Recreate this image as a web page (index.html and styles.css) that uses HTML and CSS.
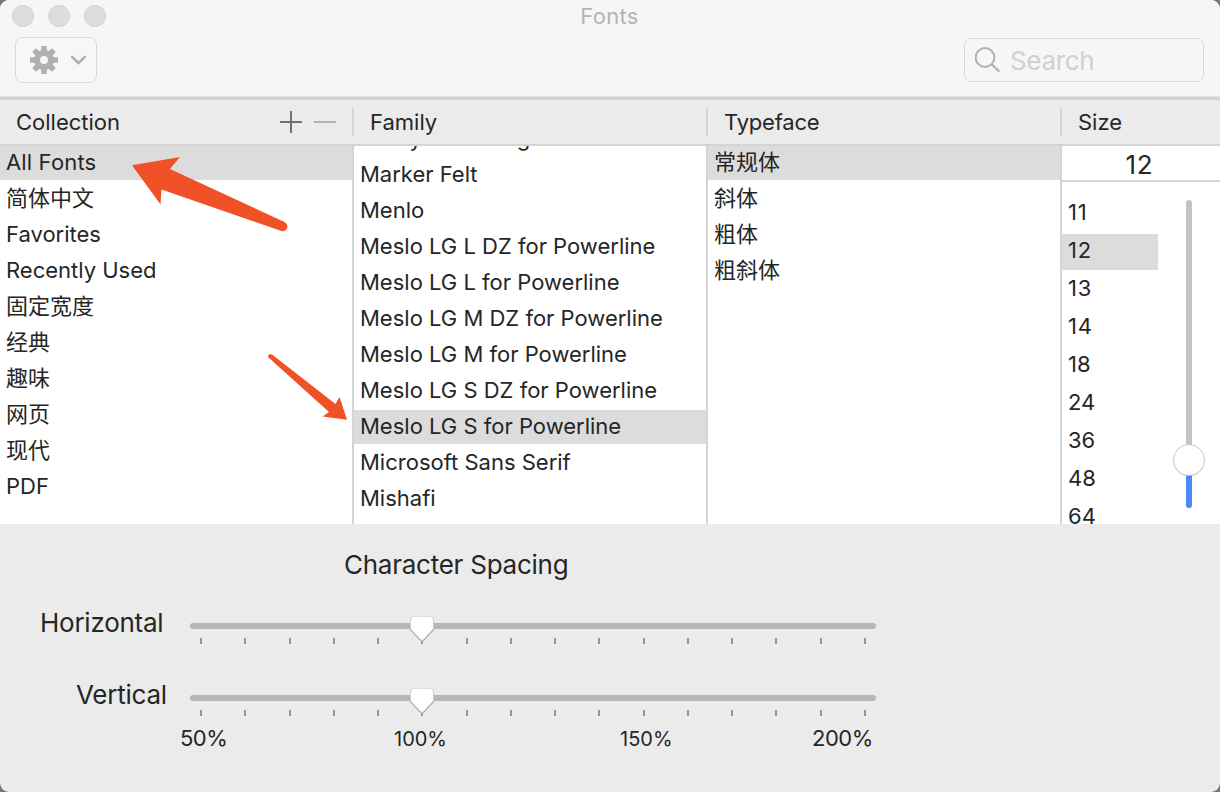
FILE: index.html
```html
<!DOCTYPE html>
<html lang="en">
<head>
<meta charset="utf-8">
<title>Fonts</title>
<link rel="stylesheet" href="styles.css">
</head>
<body>
<div class="window">
  <header class="toolbar">
    <div class="titlebar">
      <div class="lights"><i></i><i></i><i></i></div>
      <h1 class="title">Fonts</h1>
    </div>
    <div class="tools">
      <button class="gear-button" aria-label="Actions">
        <svg width="28" height="28" viewBox="-14 -14 28 28" fill="#b0b0b0">
          <path fill-rule="evenodd" d="M-10 0a10 10 0 1 0 20 0a10 10 0 1 0-20 0zM-4 0a4 4 0 1 0 8 0a4 4 0 1 0-8 0z"/>
          <g id="teeth"><path id="t" d="M-3-9L-2.600-14H2.600L3-9z"/><use href="#t" transform="rotate(45)"/><use href="#t" transform="rotate(90)"/><use href="#t" transform="rotate(135)"/></g>
          <use href="#teeth" transform="rotate(180)"/>
        </svg>
        <svg width="16" height="10" viewBox="0 0 16 10" fill="none" stroke="#b0b0b0" stroke-width="2.6" stroke-linecap="round" stroke-linejoin="round"><path d="M2.300 1.800L8.500 8.200l6.200-6.400"/></svg>
      </button>
      <div class="search">
        <svg width="26" height="26" viewBox="0 0 26 26" fill="none" stroke="#b0b0b0" stroke-width="2"><circle cx="10" cy="10.500" r="9.400"/><path d="M16.800 17.300L24.300 24.800"/></svg>
        <span>Search</span>
      </div>
    </div>
  </header>
  <div class="heads">
    <div class="head"><span>Collection</span>
      <svg class="plusminus" width="56" height="22" viewBox="0 0 56 22"><path d="M0 11H22M11 0V22" stroke="#707070" stroke-width="2"/><path d="M34 11H56" stroke="#b2b2b2" stroke-width="2"/></svg>
    </div>
    <div class="head"><span>Family</span></div>
    <div class="head"><span class="narrow">Typeface</span></div>
    <div class="head"><span>Size</span></div>
  </div>
  <main class="columns">
    <ul class="list">
      <li class="on wide">All Fonts</li><li>简体中文</li><li>Favorites</li><li>Recently Used</li><li>固定宽度</li><li>经典</li><li>趣味</li><li>网页</li><li>现代</li><li>PDF</li>
    </ul>
    <ul class="list family">
      <li>Malayalam Sangam MN</li><li>Marker Felt</li><li>Menlo</li><li>Meslo LG L DZ for Powerline</li><li>Meslo LG L for Powerline</li><li>Meslo LG M DZ for Powerline</li><li>Meslo LG M for Powerline</li><li>Meslo LG S DZ for Powerline</li><li class="on">Meslo LG S for Powerline</li><li>Microsoft Sans Serif</li><li>Mishafi</li>
    </ul>
    <ul class="list">
      <li class="on">常规体</li><li>斜体</li><li>粗体</li><li>粗斜体</li>
    </ul>
    <section class="size">
      <div class="size-field">12</div>
      <div class="size-body">
        <ul class="sizes">
          <li>10</li><li>11</li><li class="on">12</li><li>13</li><li>14</li><li>18</li><li>24</li><li>36</li><li>48</li><li>64</li>
        </ul>
        <svg class="vslider" width="40" height="324" viewBox="0 0 40 324">
          <rect x="17" y="2" width="6" height="308" rx="3" fill="#c4c4c4"/>
          <path d="M17 262h6v45a3 3 0 0 1-6 0z" fill="#4b89f7"/>
          <circle cx="20" cy="263" r="15.700" fill="#000" opacity=".12"/>
          <circle cx="20" cy="262" r="15.500" fill="#fff" stroke="#cacaca"/>
        </svg>
      </div>
    </section>
  </main>
  <footer class="spacing">
    <h2>Character Spacing</h2>
    <div class="row"><label class="l-h">Horizontal</label>
      <svg width="690" height="34" viewBox="188 614 690 34">
        <g id="hs"><rect x="190" y="623" width="686" height="6" rx="3" fill="#b6b6b6"/>
        <path d="M201 638v6M245 638v6M290 638v6M334 638v6M378 638v6M422 638v6M467 638v6M511 638v6M555 638v6M599 638v6M644 638v6M688 638v6M732 638v6M776 638v6M821 638v6M865 638v6" stroke="#969696" stroke-width="2"/>
        <path d="M414 617h16q3.500 0 3.500 3.500v9.500L423 641.300q-1 1-2 0L410.500 630v-9.500q0-3.500 3.500-3.500z" fill="#aaa" stroke="#aaa" stroke-width=".8"/>
        <path d="M414 616.300h16q3.500 0 3.500 3.500v9L423 640q-1 1-2 0L410.500 628.800v-9q0-3.500 3.500-3.500z" fill="#fff" stroke="#c4c4c4" stroke-width=".6"/></g>
      </svg>
    </div>
    <div class="row"><label class="l-v">Vertical</label>
      <svg width="690" height="34" viewBox="188 614 690 34"><use href="#hs"/></svg>
    </div>
    <div class="scale"><span class="big">50%</span><span>100%</span><span>150%</span><span class="big">200%</span></div>
  </footer>
  <svg class="arrows" width="1220" height="792" viewBox="0 0 1220 792" fill="#f15127">
    <path d="M132 165.300L180 157L170 169L284.500 222Q288 224.500 287.500 227Q286 232 281.500 231L161.500 189.500L160.500 204.500z"/>
    <path d="M268 357Q268 353.500 272 354.500L335.500 404L339.500 397L347 419.700L322.500 416.500L329 412z"/>
  </svg>
</div>
</body>
</html>
```
FILE: styles.css
```css
* { box-sizing: border-box; margin: 0; padding: 0; }
body { background: #777; font-family: Inter, "Noto Sans CJK SC", sans-serif; font-size: 22px; color: #262626; overflow: hidden; }
.window { position: relative; width: 1220px; height: 792px; background: #ebebeb; border-radius: 9px; overflow: hidden; display: flex; flex-direction: column; }
ul { list-style: none; }
svg { display: block; flex: none; }
.wide { letter-spacing: 0.15px; }
.narrow { letter-spacing: -0.2px; }
.toolbar { height: 100px; background: #f6f6f6; border-bottom: 3px solid #d2d2d2; box-shadow: inset 0 -1px #e2e2e2; }
.titlebar { display: grid; grid-template-columns: 1fr auto 1fr; height: 32px; align-items: center; }
.lights { display: flex; gap: 14px; padding-left: 12px; }
.lights i { width: 22px; height: 22px; border-radius: 50%; background: #dddddd; border: 1px solid #d0d0d0; }
.title { font-size: 22px; font-weight: 400; color: #b4b4b4; line-height: 32px; letter-spacing: 0.3px; padding-right: 1px; }
.tools { display: flex; justify-content: space-between; padding: 5px 16px 0 15px; }
.gear-button { width: 82px; height: 46px; border: 1px solid #dadada; border-radius: 8px; background: #f7f7f7; display: flex; align-items: center; gap: 12px; padding-left: 14px; }
.search { width: 240px; height: 44px; margin-top: 1px; border: 1px solid #d9d9d9; border-radius: 7px; display: flex; align-items: center; gap: 9px; padding-left: 10px; color: #d0d0d0; font-size: 26px; letter-spacing: -0.35px; }
.heads { height: 46px; display: grid; grid-template-columns: 352px 354px 354px 160px; border-bottom: 2px solid #d4d4d4; align-items: center; }
.head { height: 28px; display: flex; align-items: center; justify-content: space-between; padding-left: 16px; }
.head + .head { border-left: 2px solid #d4d4d4; }
.plusminus { margin-right: 16px; }
.columns { height: 378px; background: #fff; display: grid; grid-template-columns: 352px 354px 354px 160px; }
.list { display: flex; flex-direction: column; gap: 2px; overflow: hidden; height: 378px; }
.list + .list, .size { border-left: 2px solid #d4d4d4; }
.list li { height: 34px; line-height: 33px; padding-left: 6px; flex: none; white-space: nowrap; }
.family li:first-child { margin-top: -24px; }
.on { background: #dcdcdc; }
.size-field { height: 36px; border-bottom: 2px solid #d4d4d4; font-size: 26px; line-height: 38px; padding-left: 63.5px; letter-spacing: 0.6px; }
.size-body { display: flex; height: 342px; overflow: hidden; }
.sizes { width: 96px; margin-top: -24px; display: flex; flex-direction: column; gap: 2px; }
.sizes li { height: 36px; line-height: 33px; padding-left: 6px; flex: none; }
.sizes li:nth-child(-n+5) { letter-spacing: 0.8px; }
.vslider { margin: 16px 0 0 11px; }
.spacing { height: 268px; padding-top: 24px; }
.spacing h2 { font-size: 26px; font-weight: 400; line-height: 34px; padding-left: 344px; letter-spacing: -0.25px; }
.row { display: flex; height: 72px; font-size: 26px; letter-spacing: -0.25px; }
.row label { width: 188px; line-height: 34px; padding-top: 24px; }
.row .l-h { padding-left: 40px; }
.row .l-v { padding-left: 76px; }
.row svg { margin-top: 32px; }
.scale { display: flex; margin-top: -1px; padding-left: 180px; font-size: 20px; line-height: 26px; align-items: baseline; }
.scale .big { font-size: 22px; letter-spacing: -0.5px; }
.scale span { width: 214px; }
.scale span:nth-child(2) { width: 226px; }
.scale span:nth-child(3) { width: 192px; }
.arrows { position: absolute; left: 0; top: 0; pointer-events: none; }
```
